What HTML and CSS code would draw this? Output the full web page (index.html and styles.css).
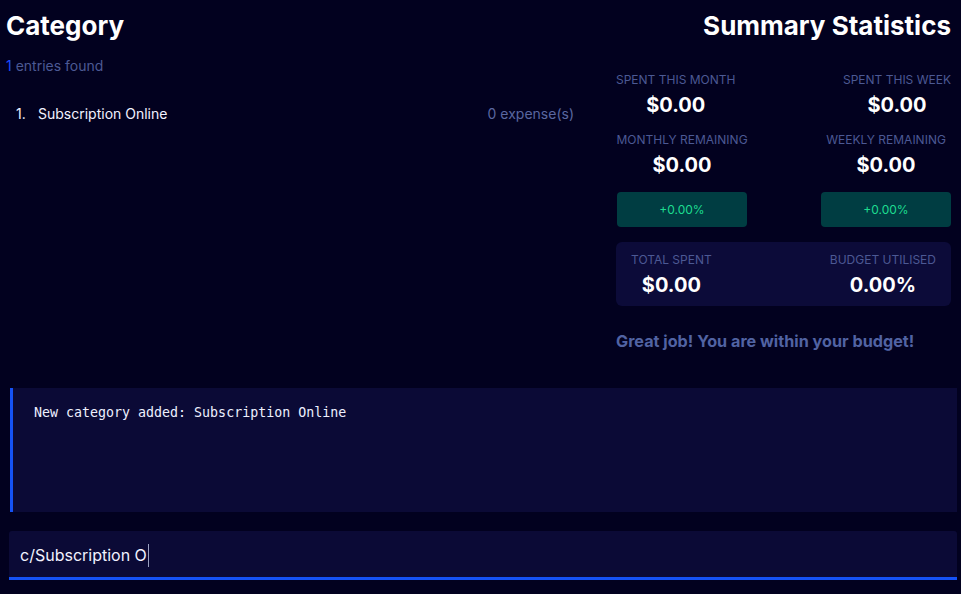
FILE: index.html
```html
<!DOCTYPE html>
<html lang="en">
<head>
<meta charset="utf-8">
<title>Category</title>
<link rel="stylesheet" href="styles.css">
</head>
<body>
<div class="app">
  <div class="top">
    <section class="left">
      <h1 class="title">Category</h1>
      <p class="count"><span class="count-num">1</span> entries found</p>
      <ol class="list">
        <li class="item"><span class="item-idx">1.</span><span class="item-name">Subscription Online</span><span class="item-meta">0 expense(s)</span></li>
      </ol>
    </section>
    <aside class="right">
      <h1 class="title title-right">Summary Statistics</h1>
      <div class="row row-first">
        <div class="stat"><div class="label">Spent this month</div><div class="value">$0.00</div></div>
        <div class="stat"><div class="label">Spent this week</div><div class="value">$0.00</div></div>
      </div>
      <div class="row row-second">
        <div class="stat stat-w"><div class="label">Monthly remaining</div><div class="value">$0.00</div><div class="badge">+0.00%</div></div>
        <div class="stat stat-w"><div class="label">Weekly remaining</div><div class="value">$0.00</div><div class="badge">+0.00%</div></div>
      </div>
      <div class="card">
        <div class="stat"><div class="label">Total spent</div><div class="value">$0.00</div></div>
        <div class="stat"><div class="label">Budget utilised</div><div class="value">0.00%</div></div>
      </div>
      <p class="note">Great job! You are within your budget!</p>
    </aside>
  </div>
  <div class="message">New category added: Subscription Online</div>
  <div class="input"><span class="input-text">c/Subscription O</span><span class="caret"></span></div>
</div>
</body>
</html>
```

FILE: styles.css
```css
* { box-sizing: border-box; }
html, body {
  margin: 0;
  padding: 0;
  background: #02011f;
  height: 100%;
}
body {
  font-family: Inter, "Noto Sans", sans-serif;
  color: #ffffff;
}
.app {
  width: 961px;
  height: 594px;
  overflow: hidden;
}
.top {
  display: flex;
  gap: 42px;
  padding: 10px 10px 0 6px;
}
.left { flex: 1; }
.right { width: 335px; flex: none; }
.title {
  margin: 0;
  font-size: 26px;
  line-height: 32px;
  font-weight: 700;
  color: #ffffff;
}
.title-right { text-align: right; }
.count {
  margin: 14px 0 0;
  font-size: 14px;
  line-height: 20px;
  color: #4c5994;
}
.count-num { color: #1a4cff; }
.list {
  list-style: none;
  margin: 28px 0 0;
  padding: 0;
}
.item {
  display: flex;
  font-size: 14px;
  line-height: 20px;
  color: #f2f2ff;
}
.item-idx { width: 32px; padding-left: 10px; }
.item-name { flex: 1; }
.item-meta { color: #5a67a0; }
.row {
  display: flex;
  justify-content: space-between;
}
.row-first { margin-top: 30px; }
.row-second { margin-top: 13px; padding-left: 1px; }
.stat {
  display: flex;
  flex-direction: column;
  align-items: center;
}
.stat-w { width: 130px; }
.label {
  font-size: 12px;
  line-height: 16px;
  text-transform: uppercase;
  color: #4c5994;
  white-space: nowrap;
}
.value {
  margin-top: 3px;
  font-size: 20px;
  line-height: 28px;
  font-weight: 700;
  color: #ffffff;
}
.badge {
  margin-top: 13px;
  width: 130px;
  height: 35px;
  border-radius: 4px;
  background: #003d42;
  color: #1ddc90;
  font-size: 12px;
  display: flex;
  align-items: center;
  justify-content: center;
}
.card {
  margin-top: 15px;
  background: #0c0b39;
  border-radius: 6px;
  padding: 10px 15px 7px;
  display: flex;
  justify-content: space-between;
}
.note {
  margin: 25px 0 0;
  font-size: 16.2px;
  line-height: 20px;
  font-weight: 700;
  color: #5163a3;
}
.message {
  margin: 37px 4px 0 10px;
  height: 124px;
  background: #0b0a36;
  border-left: 3px solid #1552f5;
  padding: 15px 0 0 21px;
  font-family: "DejaVu Sans Mono", "Liberation Mono", monospace;
  font-size: 13.3px;
  line-height: 20px;
  color: #eef0ff;
}
.input {
  margin: 19px 4px 0 9px;
  height: 49px;
  background: #0b0a36;
  border-radius: 3px 3px 0 0;
  border-bottom: 3px solid #1552f5;
  padding: 2px 0 0 11px;
  display: flex;
  align-items: center;
  font-size: 16px;
  color: #f2f2ff;
}
.caret {
  display: inline-block;
  width: 1px;
  height: 23px;
  background: #9aa0c0;
  margin-left: 1px;
}
```
